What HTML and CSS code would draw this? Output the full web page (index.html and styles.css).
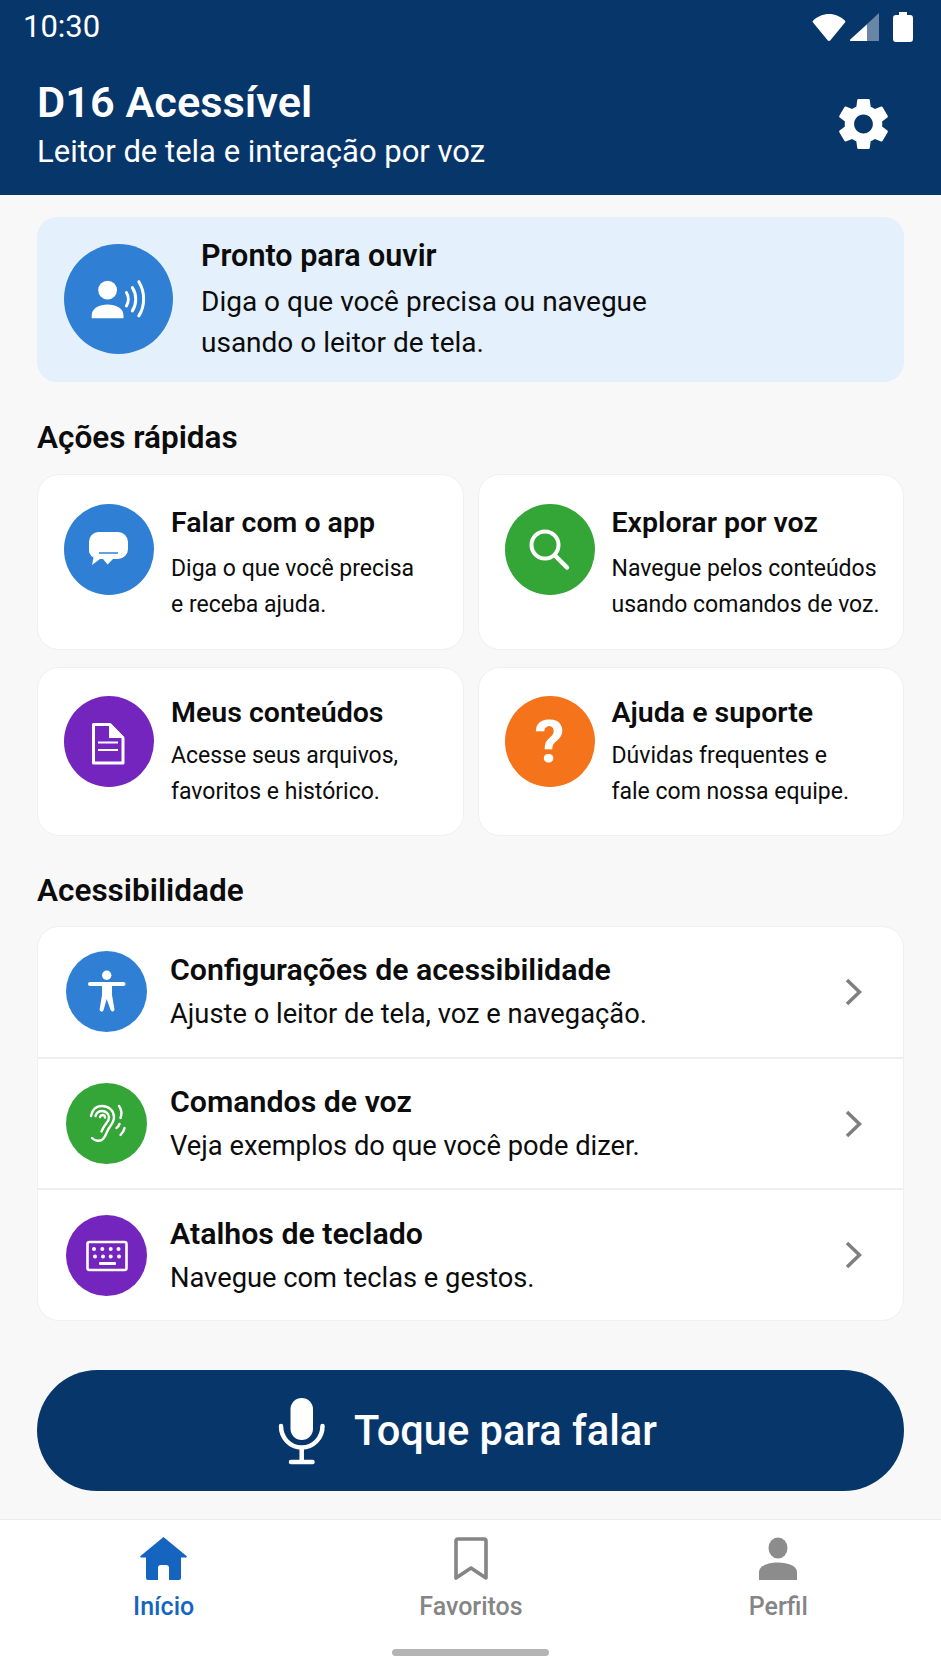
FILE: index.html
```html
<!DOCTYPE html>
<html lang="pt-BR">
<head>
<meta charset="utf-8">
<title>D16 Acessível</title>
<link rel="stylesheet" href="styles.css">
</head>
<body>
<div class="app">
  <header class="header">
    <div class="status">
      <span class="time">10:30</span>
      <div class="status-icons">
        <svg class="i-wifi" viewBox="0 0 34 28"><path d="M17 28c-.6 0-1-.3-1.400-.8L1 9.500C.4 8.800.5 8 1.200 7.500 5.500 3.500 11 1 17 1s11.500 2.500 15.800 6.500c.7.500.8 1.300.2 2L18.400 27.200c-.4.500-.8.800-1.400.8z" fill="#fff"/></svg>
        <svg class="i-signal" viewBox="0 0 29 28"><path d="M29 0v28H1c-1 0-1.400-.8-.7-1.500z" fill="#fff" fill-opacity=".4"/><path d="M17 11.500V28H1c-1 0-1.400-.8-.7-1.500z" fill="#fff"/></svg>
        <svg class="i-batt" viewBox="0 0 20 30"><path d="M6 0h8v3h3a3 3 0 0 1 3 3v21a3 3 0 0 1-3 3H3a3 3 0 0 1-3-3V6a3 3 0 0 1 3-3h3z" fill="#fff"/></svg>
      </div>
    </div>
    <div class="appbar">
      <div class="appbar-text">
        <h1 class="app-title">D16 Acessível</h1>
        <p class="app-sub">Leitor de tela e interação por voz</p>
      </div>
      <svg class="i-gear" viewBox="2.600 2.600 18.800 18.800"><path fill="#fff" d="M19.140 12.940c.04-.3.06-.61.06-.94 0-.32-.02-.64-.07-.94l2.030-1.580c.18-.14.23-.41.12-.61l-1.920-3.320c-.12-.22-.37-.29-.59-.22l-2.390.96c-.5-.38-1.030-.7-1.620-.94l-.36-2.540c-.04-.24-.24-.41-.48-.41h-3.840c-.24 0-.43.17-.47.41l-.36 2.540c-.59.24-1.130.57-1.620.94l-2.390-.96c-.22-.08-.47 0-.59.22L2.740 8.870c-.12.21-.08.47.12.61l2.030 1.580c-.05.3-.09.63-.09.94s.02.64.07.94l-2.030 1.580c-.18.14-.23.41-.12.61l1.920 3.320c.12.22.37.29.59.22l2.390-.96c.5.38 1.030.7 1.620.94l.36 2.540c.05.24.24.41.48.41h3.840c.24 0 .44-.17.47-.41l.36-2.540c.59-.24 1.130-.56 1.620-.94l2.390.96c.22.08.47 0 .59-.22l1.920-3.320c.12-.22.07-.47-.12-.61l-2.010-1.580zM12 15.600c-1.980 0-3.600-1.620-3.600-3.600s1.620-3.600 3.600-3.600 3.600 1.620 3.600 3.600-1.620 3.600-3.600 3.600z"/></svg>
    </div>
  </header>

  <main class="main">
    <section class="hero">
      <div class="circle circle-hero blue">
        <svg viewBox="0 0 110 110" width="110" height="110"><circle cx="44" cy="46" r="9.500" fill="#fff"/><path d="M28 74.500v-3C28 64 36 60.500 44 60.500S60 64 60 71.500v3z" fill="#fff"/><g fill="none" stroke="#fff" stroke-width="3" stroke-linecap="round"><path d="M63 48.500c2.500 4 2.500 9.500 0 13.500"/><path d="M69 43.500c4.500 7 4.500 16.500 0 23.500"/><path d="M75.500 37.500c6.500 10.500 6.500 24.500 0 34.500"/></g></svg>
      </div>
      <div class="hero-text">
        <h2 class="hero-title">Pronto para ouvir</h2>
        <p class="hero-desc">Diga o que você precisa ou navegue<br>usando o leitor de tela.</p>
      </div>
    </section>

    <h2 class="section-title">Ações rápidas</h2>
    <div class="grid">
      <article class="card card-tall">
        <div class="circle circle-card blue">
          <svg viewBox="0 0 90 90" width="90" height="90"><path d="M34 27h20a10 10 0 0 1 10 10v7a10 10 0 0 1-10 10h-5l-5.500 5.500L39 54h-3l-8 6 1.500-7.500A9 9 0 0 1 25 44v-7a9.500 9.500 0 0 1 9-10z" fill="#fff"/><path d="M35 48h19" stroke="#2f80d5" stroke-width="1.500"/></svg>
        </div>
        <div class="card-text">
          <h3 class="card-title">Falar com o app</h3>
          <p class="card-desc">Diga o que você precisa<br>e receba ajuda.</p>
        </div>
      </article>
      <article class="card card-tall">
        <div class="circle circle-card green">
          <svg viewBox="0 0 90 90" width="90" height="90"><g fill="none" stroke="#fff" stroke-linecap="round"><circle cx="40" cy="40" r="13.500" stroke-width="4"/><path d="M50 50.500 62 62.500" stroke-width="4.500"/></g></svg>
        </div>
        <div class="card-text">
          <h3 class="card-title">Explorar por voz</h3>
          <p class="card-desc">Navegue pelos conteúdos<br>usando comandos de voz.</p>
        </div>
      </article>
      <article class="card">
        <div class="circle circle-card purple">
          <svg viewBox="0 0 90 90" width="90" height="90"><path d="M29.500 27.500H46L59 41v25H29.500z" fill="none" stroke="#fff" stroke-width="3" stroke-linejoin="round"/><path d="M45 27h2l13 13v1H45z" fill="#fff"/><path d="M34 45.500h20M34 53h20" stroke="#fff" stroke-width="2.200"/></svg>
        </div>
        <div class="card-text">
          <h3 class="card-title">Meus conteúdos</h3>
          <p class="card-desc">Acesse seus arquivos,<br>favoritos e histórico.</p>
        </div>
      </article>
      <article class="card">
        <div class="circle circle-card orange"><span class="question">?</span></div>
        <div class="card-text">
          <h3 class="card-title">Ajuda e suporte</h3>
          <p class="card-desc">Dúvidas frequentes e<br>fale com nossa equipe.</p>
        </div>
      </article>
    </div>

    <h2 class="section-title section-title-second">Acessibilidade</h2>
    <div class="list">
      <article class="row">
        <div class="circle circle-row blue">
          <svg viewBox="0 0 81 81" width="81" height="81"><circle cx="40.700" cy="24.300" r="4.700" fill="#fff"/><rect x="22" y="31" width="37.500" height="4" rx="2" fill="#fff"/><path d="M36 33h10v11l2.500 14.500a2 2 0 0 1-3.800.8L40.700 48l-3.300 11.500a2 2 0 0 1-3.800-.9L36 44z" fill="#fff"/></svg>
        </div>
        <div class="row-text">
          <h3 class="row-title">Configurações de acessibilidade</h3>
          <p class="row-desc">Ajuste o leitor de tela, voz e navegação.</p>
        </div>
        <svg class="chev" viewBox="0 0 17 28"><path d="M2 2l12.500 12L2 26" fill="none" stroke="#7f7f7f" stroke-width="3.500"/></svg>
      </article>
      <article class="row">
        <div class="circle circle-row green">
          <svg viewBox="0 0 81 81" width="81" height="81"><g fill="none" stroke="#fff" stroke-linecap="round" stroke-width="2.400"><path d="M25 33c1-6 5-10 11-10 7 0 12 5 12 11 0 5-3 8-5 11-2 3-3 8-6 11-3 3-8 2-11-1"/><path d="M29.500 33c1-3 3.500-5 6.500-5 4 0 7 3 7 6.500 0 3-2 5-3.500 7-2 2.500-3 4.500-4 7"/><path d="M34 34c.5-1.500 1.500-2 2.500-2 1.500 0 2.500 1 2.500 2.500"/><path d="M53 23c2.500 3.500 3 8 1.500 12"/><path d="M50.500 45c1.500-1 2.500-2.500 3-4"/><path d="M54.500 52c2-2 3.500-4.500 4-7"/></g></svg>
        </div>
        <div class="row-text">
          <h3 class="row-title">Comandos de voz</h3>
          <p class="row-desc">Veja exemplos do que você pode dizer.</p>
        </div>
        <svg class="chev" viewBox="0 0 17 28"><path d="M2 2l12.500 12L2 26" fill="none" stroke="#7f7f7f" stroke-width="3.500"/></svg>
      </article>
      <article class="row">
        <div class="circle circle-row purple">
          <svg viewBox="0 0 81 81" width="81" height="81"><rect x="21.500" y="27" width="39" height="28" rx="2" fill="none" stroke="#fff" stroke-width="2.600"/><g fill="#fff"><circle cx="28" cy="34" r="2"/><circle cx="36.300" cy="34" r="2"/><circle cx="44.700" cy="34" r="2"/><circle cx="52.500" cy="34" r="2"/><circle cx="29" cy="41.500" r="2"/><circle cx="37" cy="41.500" r="2"/><circle cx="44.700" cy="41.500" r="2"/><circle cx="53" cy="41.500" r="2"/><rect x="33" y="47" width="17" height="3" rx="1"/></g></svg>
        </div>
        <div class="row-text">
          <h3 class="row-title">Atalhos de teclado</h3>
          <p class="row-desc">Navegue com teclas e gestos.</p>
        </div>
        <svg class="chev" viewBox="0 0 17 28"><path d="M2 2l12.500 12L2 26" fill="none" stroke="#7f7f7f" stroke-width="3.500"/></svg>
      </article>
    </div>

    <button class="talk" type="button">
      <svg class="i-mic" viewBox="0 0 48 68"><rect x="12.500" y="1" width="22.500" height="42" rx="11.250" fill="#fff"/><g fill="none" stroke="#fff" stroke-width="4.500"><path d="M3 29c0 12 9 21.500 20.700 21.500S44.500 41 44.500 29" stroke-linecap="round"/><path d="M23.700 50v14"/><path d="M13 65h21.500" stroke-linecap="round"/></g></svg>
      <span class="talk-label">Toque para falar</span>
    </button>
  </main>

  <nav class="nav">
    <div class="nav-item active">
      <svg class="nav-icon" viewBox="0 0 47 44" width="47" height="44"><path fill="#1565c0" d="M23.500 0 46.500 19c.8.800.4 1.500-.5 1.500h-5V41a2 2 0 0 1-2 2h-10V31a3 3 0 0 0-3-3h-5a3 3 0 0 0-3 3v12H8a2 2 0 0 1-2-2V20.500H1c-.9 0-1.300-.7-.5-1.500z"/></svg>
      <span class="nav-label">Início</span>
    </div>
    <div class="nav-item">
      <svg class="nav-icon" viewBox="0 0 34 44" width="34" height="44"><path d="M4 2h26a2 2 0 0 1 2 2v37L17 31 2 41V4a2 2 0 0 1 2-2z" fill="none" stroke="#858585" stroke-width="3.600" stroke-linejoin="round"/></svg>
      <span class="nav-label">Favoritos</span>
    </div>
    <div class="nav-item">
      <svg class="nav-icon" viewBox="0 0 38 44" width="38" height="44"><ellipse cx="19" cy="11" rx="9.500" ry="10.500" fill="#8c8c8c"/><path d="M0 43v-8c0-6 9-9.500 19-9.500S38 29 38 35v8z" fill="#8c8c8c"/></svg>
      <span class="nav-label">Perfil</span>
    </div>
    <div class="home-bar"></div>
  </nav>
</div>
</body>
</html>
```

FILE: styles.css
```css
* { box-sizing: border-box; }
html, body { margin: 0; padding: 0; }
body { font-family: Roboto, "Liberation Sans", sans-serif; color: #0c0c0c; background: #f8f8f8; }
h1, h2, h3, p { margin: 0; font-weight: 400; }

.app { width: 941px; height: 1672px; display: flex; flex-direction: column; overflow: hidden; }

.header { height: 195px; background: #07366b; color: #fff; padding: 0 28px 0 23px; flex: none; }
.status { height: 54px; display: flex; align-items: center; justify-content: space-between; }
.time { font-size: 31px; line-height: 54px; }
.status-icons { display: flex; align-items: flex-start; }
.i-wifi { width: 34px; height: 28px; margin-right: 4px; margin-top: 1px; }
.i-signal { width: 29px; height: 28px; margin-right: 14px; margin-top: 1px; }
.i-batt { width: 20px; height: 30px; }

.appbar { display: flex; justify-content: space-between; align-items: flex-start; padding: 25px 25px 0 14px; }
.app-title { font-size: 43.300px; line-height: 48px; font-weight: 600; }
.app-sub { font-size: 31px; line-height: 36px; margin-top: 7px; font-weight: 400; }
.i-gear { width: 49px; height: 50px; margin-top: 20px; }

.main { flex: 1; padding: 22px 37px 0; display: flex; flex-direction: column; }

.circle { border-radius: 50%; flex: none; display: flex; align-items: center; justify-content: center; }
.blue { background: #2f80d5; }
.green { background: #34a537; }
.purple { background: #7425be; }
.orange { background: #f5731b; }

.hero { height: 165px; background: #e4f0fb; border-radius: 20px; display: flex; padding: 27px 27px; }
.circle-hero { width: 109px; height: 110px; }
.hero-text { margin-left: 28px; }
.hero-title { font-size: 30.500px; line-height: 34px; font-weight: 600; margin-top: -5px; }
.hero-desc { font-size: 28px; line-height: 41px; margin-top: 8px; }

.section-title { font-size: 31.500px; line-height: 32px; font-weight: 600; margin-top: 40px; height: 32px; }
.section-title-second { margin-top: 39px; }

.grid { display: grid; grid-template-columns: 1fr 1fr; grid-template-rows: 176px 169px; gap: 17px 14px; margin-top: 20px; }
.card { background: #fff; border: 1px solid #f0f0f0; border-radius: 22px; display: flex; padding: 28px 0 0 26px; }
.circle-card { width: 90px; height: 91px; }
.card-text { margin-left: 17px; }
.card-title { font-size: 28.500px; line-height: 34px; font-weight: 600; }
.card-desc { font-size: 23px; line-height: 36px; margin-top: 8px; }
.card-tall { padding-top: 29px; }
.card-tall .card-text { padding-top: 2px; }
.card-tall .card-desc { margin-top: 11px; }
.question { color: #fff; font-size: 60px; line-height: 1; font-weight: 700; }

.list { height: 395px; margin-top: 19px; background: #fff; border: 1px solid #f0f0f0; border-radius: 22px; display: flex; flex-direction: column; }
.row { flex: 1; display: flex; align-items: center; padding: 0 41px 0 28px; border-bottom: 2px solid #efefef; }
.row:last-child { border-bottom: 0; }
.circle-row { width: 81px; height: 81px; }
.row-text { flex: 1; margin-left: 23px; padding-top: 1px; }
.row-title { font-size: 30.300px; line-height: 36px; font-weight: 600; }
.row-desc { font-size: 27.300px; line-height: 36px; margin-top: 8px; }
.chev { width: 17px; height: 28px; flex: none; }

.talk { height: 121px; margin-top: 49px; border: 0; border-radius: 61px; background: #07366b; color: #fff; font-family: inherit; display: flex; align-items: center; justify-content: center; padding: 0 6px 0 0; flex: none; }
.i-mic { width: 48px; height: 68px; }
.talk-label { font-size: 41.600px; font-weight: 500; margin-left: 28px; }

.nav { height: 153px; flex: none; background: #fff; border-top: 1px solid #ececec; display: grid; grid-template-columns: repeat(3, 1fr); padding: 17px 9px 0 10px; position: relative; align-items: start; }
.nav-item { display: flex; flex-direction: column; align-items: center; color: #858585; }
.nav-icon { display: block; }
.nav-label { font-size: 25px; line-height: 30px; font-weight: 500; margin-top: 11px; }
.active { color: #1565c0; }
.home-bar { position: absolute; left: 392px; top: 129px; width: 157px; height: 7px; border-radius: 4px; background: #b4b4b4; }
```
